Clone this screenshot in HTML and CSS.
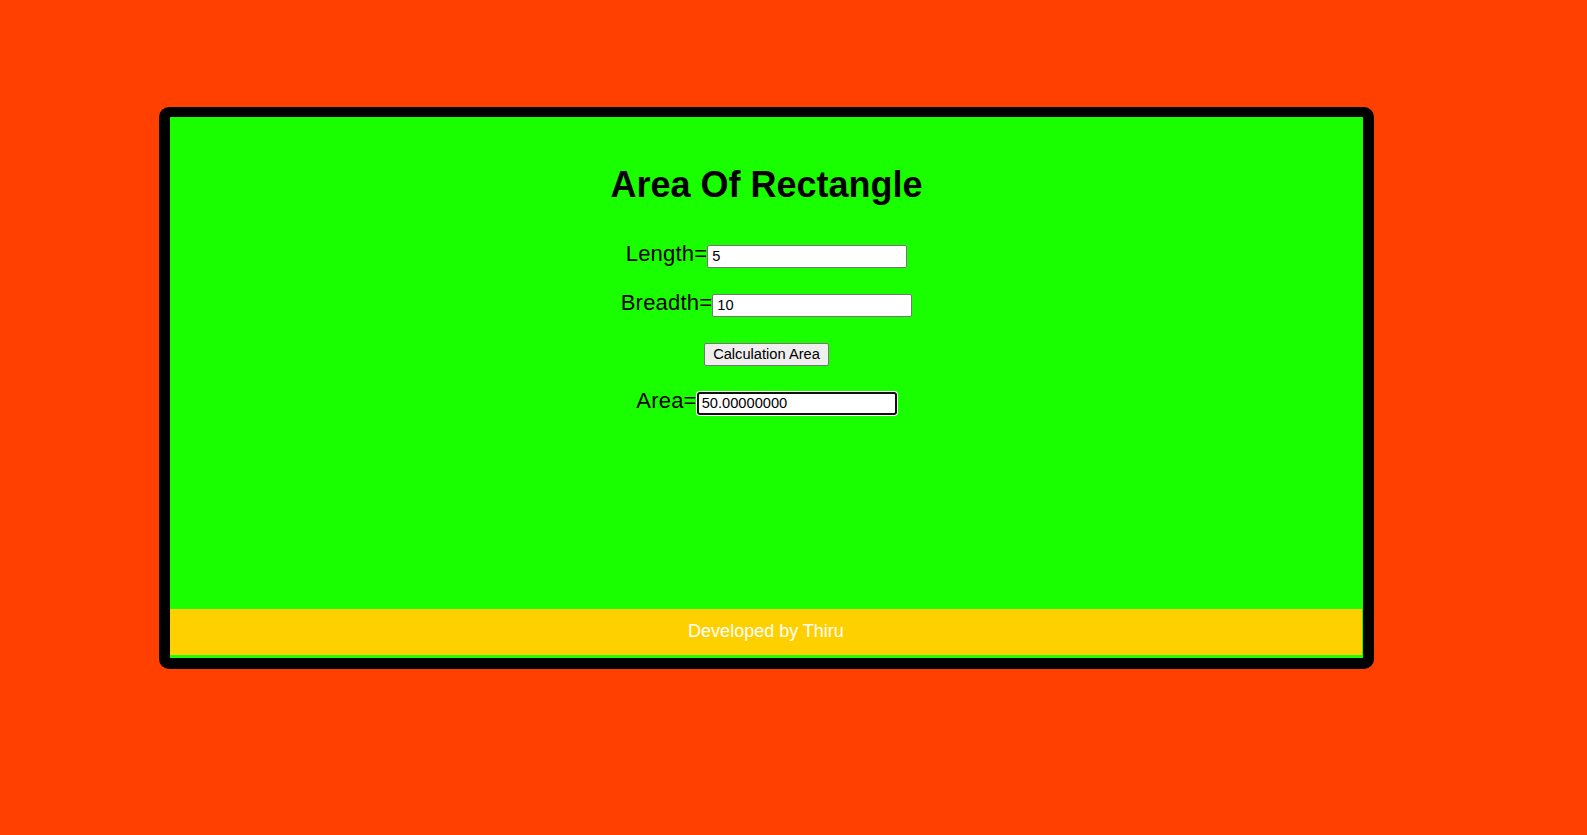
FILE: index.html
```html
<!DOCTYPE html>
<html lang="en">
<head>
<meta charset="utf-8">
<title>Area Of Rectangle</title>
<link rel="stylesheet" href="styles.css">
</head>
<body>
  <div class="card">
    <div class="content">
      <h1 class="title">Area Of Rectangle</h1>
      <div class="row"><span class="label">Length=</span><input class="field" type="text" value="5"></div>
      <div class="row"><span class="label">Breadth=</span><input class="field" type="text" value="10"></div>
      <div class="row"><button class="btn" type="button">Calculation Area</button></div>
      <div class="row"><span class="label">Area=</span><input class="field field-focus" type="text" value="50.00000000"></div>
    </div>
    <div class="footer">Developed by Thiru</div>
  </div>
</body>
</html>
```

FILE: styles.css
```css
html, body {
  margin: 0;
  padding: 0;
}
body {
  background: #ff4000;
  font-family: "Liberation Sans", Arial, sans-serif;
  min-height: 835px;
  padding-top: 107px;
  padding-left: 159px;
  box-sizing: border-box;
}
.card {
  width: 1215px;
  height: 562px;
  box-sizing: border-box;
  border: 11px solid #000;
  border-top-width: 10px;
  border-radius: 10px;
  background: #1aff00;
  display: flex;
  flex-direction: column;
}
.content {
  flex: 1;
  display: flex;
  flex-direction: column;
  align-items: stretch;
  padding-top: 47px;
}
.title {
  margin: 0 0 36px 0;
  font-size: 36px;
  line-height: 41px;
  font-weight: bold;
  text-align: center;
  color: #000;
}
.row {
  height: 27px;
  flex: none;
  text-align: center;
  font-size: 22px;
  line-height: normal;
  margin-bottom: 22px;
  color: #000;
}
.label {
  font-size: 22px;
  letter-spacing: 0.2px;
}
.field {
  box-sizing: border-box;
  width: 200px;
  height: 23px;
  border: 1px solid #767676;
  border-radius: 2px;
  padding: 2px 4px;
  margin: 0;
  background: #fff;
  font-family: "Liberation Sans", Arial, sans-serif;
  font-size: 14.67px;
  color: #000;
  vertical-align: baseline;
  outline: none;
}
.field-focus {
  border: 2px solid #101010;
  padding: 1px 3px;
  border-radius: 3px;
  box-shadow: 0 0 0 1px #fff;
}
.btn {
  box-sizing: border-box;
  height: 23px;
  border: 1px solid #767676;
  border-radius: 2px;
  padding: 1px 8.5px;
  margin: 0;
  background: #efefef;
  font-family: "Liberation Sans", Arial, sans-serif;
  font-size: 14.67px;
  color: #000;
  vertical-align: baseline;
}
.footer {
  height: 46px;
  box-sizing: border-box;
  padding-bottom: 2px;
  margin: 0 1px 3px 0;
  background: #ffd000;
  color: #fff;
  font-size: 18px;
  display: flex;
  align-items: center;
  justify-content: center;
}
```
